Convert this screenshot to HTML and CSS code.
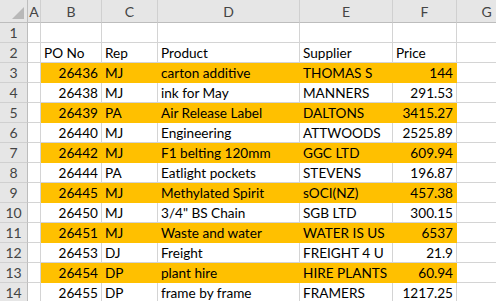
FILE: index.html
```html
<!DOCTYPE html>
<html lang="en">
  <head>
    <meta charset="UTF-8" />
    <title>Purchase Orders</title>
    <link rel="stylesheet" href="styles.css">
  </head>
  <body>
    <div class="sheet">
      <!-- Column headers -->
      <div class="hd corner"><span class="tri"></span></div>
      <div class="hd">A</div>
      <div class="hd">B</div>
      <div class="hd">C</div>
      <div class="hd">D</div>
      <div class="hd">E</div>
      <div class="hd">F</div>
      <div class="hd">G</div>

      <div class="rn">1</div>
      <div class="c"></div><div class="c"></div><div class="c"></div><div class="c"></div><div class="c"></div><div class="c"></div><div class="c"></div>

      <div class="rn">2</div>
      <div class="c"></div>
      <div class="c">PO No</div>
      <div class="c">Rep</div>
      <div class="c">Product</div>
      <div class="c">Supplier</div>
      <div class="c">Price</div>
      <div class="c"></div>

      <div class="rn">3</div>
      <div class="c"></div>
      <div class="c num hl">26436</div>
      <div class="c hl">MJ</div>
      <div class="c hl">carton additive</div>
      <div class="c hl">THOMAS S</div>
      <div class="c num hl">144</div>
      <div class="c"></div>

      <div class="rn">4</div>
      <div class="c"></div>
      <div class="c num">26438</div>
      <div class="c">MJ</div>
      <div class="c">ink for May</div>
      <div class="c">MANNERS</div>
      <div class="c num">291.53</div>
      <div class="c"></div>

      <div class="rn">5</div>
      <div class="c"></div>
      <div class="c num hl">26439</div>
      <div class="c hl">PA</div>
      <div class="c hl">Air Release Label</div>
      <div class="c hl">DALTONS</div>
      <div class="c num hl">3415.27</div>
      <div class="c"></div>

      <div class="rn">6</div>
      <div class="c"></div>
      <div class="c num">26440</div>
      <div class="c">MJ</div>
      <div class="c">Engineering</div>
      <div class="c">ATTWOODS</div>
      <div class="c num">2525.89</div>
      <div class="c"></div>

      <div class="rn">7</div>
      <div class="c"></div>
      <div class="c num hl">26442</div>
      <div class="c hl">MJ</div>
      <div class="c hl">F1 belting 120mm</div>
      <div class="c hl">GGC LTD</div>
      <div class="c num hl">609.94</div>
      <div class="c"></div>

      <div class="rn">8</div>
      <div class="c"></div>
      <div class="c num">26444</div>
      <div class="c">PA</div>
      <div class="c">Eatlight pockets</div>
      <div class="c">STEVENS</div>
      <div class="c num">196.87</div>
      <div class="c"></div>

      <div class="rn">9</div>
      <div class="c"></div>
      <div class="c num hl">26445</div>
      <div class="c hl">MJ</div>
      <div class="c hl">Methylated Spirit</div>
      <div class="c hl">sOCI(NZ)</div>
      <div class="c num hl">457.38</div>
      <div class="c"></div>

      <div class="rn">10</div>
      <div class="c"></div>
      <div class="c num">26450</div>
      <div class="c">MJ</div>
      <div class="c">3/4" BS Chain</div>
      <div class="c">SGB LTD</div>
      <div class="c num">300.15</div>
      <div class="c"></div>

      <div class="rn">11</div>
      <div class="c"></div>
      <div class="c num hl">26451</div>
      <div class="c hl">MJ</div>
      <div class="c hl">Waste and water</div>
      <div class="c hl">WATER IS US</div>
      <div class="c num hl">6537</div>
      <div class="c"></div>

      <div class="rn">12</div>
      <div class="c"></div>
      <div class="c num">26453</div>
      <div class="c">DJ</div>
      <div class="c">Freight</div>
      <div class="c">FREIGHT 4 U</div>
      <div class="c num">21.9</div>
      <div class="c"></div>

      <div class="rn">13</div>
      <div class="c"></div>
      <div class="c num hl">26454</div>
      <div class="c hl">DP</div>
      <div class="c hl">plant hire</div>
      <div class="c hl">HIRE PLANTS</div>
      <div class="c num hl">60.94</div>
      <div class="c"></div>

      <div class="rn">14</div>
      <div class="c"></div>
      <div class="c num">26455</div>
      <div class="c">DP</div>
      <div class="c">frame by frame</div>
      <div class="c">FRAMERS</div>
      <div class="c num">1217.25</div>
      <div class="c"></div>
    </div>
  </body>
</html>
```

FILE: styles.css
```css
:root {
  --grid: #d4d4d4;
  --head-bg: #e6e6e6;
  --head-line: #bdbdbd;
  --fill: #ffc000;
}

body {
  margin: 0;
  background: #ffffff;
  font-family: Lato, "Liberation Sans", sans-serif;
  font-size: 13.6px;
  color: #000;
  overflow: hidden;
}

.sheet {
  display: grid;
  grid-template-columns: 28px 13px 61px 56px 142px 93px 64px 60px;
  grid-auto-rows: 20px;
  grid-template-rows: 23px;
}

.sheet > div {
  box-sizing: border-box;
  border-right: 1px solid var(--grid);
  border-bottom: 1px solid var(--grid);
  white-space: nowrap;
  overflow: hidden;
  line-height: 20px;
}

.hd {
  background: var(--head-bg);
  color: #444;
  font-size: 14px;
  text-align: center;
  line-height: 23px !important;
  border-bottom-color: var(--head-line) !important;
  border-right-color: #d0d0d0 !important;
}

.corner {
  position: relative;
  border-right-color: var(--head-line) !important;
}

.corner .tri {
  position: absolute;
  right: 3px;
  bottom: 3px;
  width: 0;
  height: 0;
  border-left: 12px solid transparent;
  border-bottom: 12px solid #b8b8b8;
}

.rn {
  background: var(--head-bg);
  color: #444;
  font-size: 14px;
  text-align: center;
  border-right-color: var(--head-line) !important;
  border-bottom-color: #d0d0d0 !important;
}

.c {
  padding: 0 3px;
}

.num {
  text-align: right;
}

.hl {
  background: var(--fill);
  border-color: var(--fill) !important;
}
```
